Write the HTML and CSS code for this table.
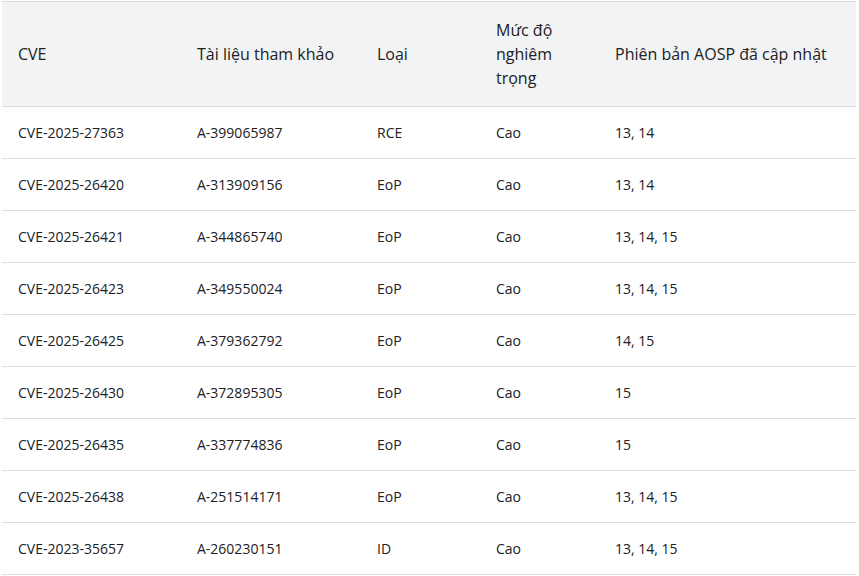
FILE: index.html
```html
<!DOCTYPE html>
<html lang="vi">
<head>
<meta charset="utf-8">
<link rel="stylesheet" href="styles.css">
</head>
<body>
<div class="wrap">
<table class="cve-table">
  <colgroup>
    <col class="c1"><col class="c2"><col class="c3"><col class="c4"><col class="c5">
  </colgroup>
  <thead>
    <tr>
      <th>CVE</th>
      <th>Tài liệu tham khảo</th>
      <th>Loại</th>
      <th>Mức độ nghiêm trọng</th>
      <th>Phiên bản AOSP đã cập nhật</th>
    </tr>
  </thead>
  <tbody>
    <tr><td>CVE-2025-27363</td><td>A-399065987</td><td>RCE</td><td>Cao</td><td>13, 14</td></tr>
    <tr><td>CVE-2025-26420</td><td>A-313909156</td><td>EoP</td><td>Cao</td><td>13, 14</td></tr>
    <tr><td>CVE-2025-26421</td><td>A-344865740</td><td>EoP</td><td>Cao</td><td>13, 14, 15</td></tr>
    <tr><td>CVE-2025-26423</td><td>A-349550024</td><td>EoP</td><td>Cao</td><td>13, 14, 15</td></tr>
    <tr><td>CVE-2025-26425</td><td>A-379362792</td><td>EoP</td><td>Cao</td><td>14, 15</td></tr>
    <tr><td>CVE-2025-26430</td><td>A-372895305</td><td>EoP</td><td>Cao</td><td>15</td></tr>
    <tr><td>CVE-2025-26435</td><td>A-337774836</td><td>EoP</td><td>Cao</td><td>15</td></tr>
    <tr><td>CVE-2025-26438</td><td>A-251514171</td><td>EoP</td><td>Cao</td><td>13, 14, 15</td></tr>
    <tr><td>CVE-2023-35657</td><td>A-260230151</td><td>ID</td><td>Cao</td><td>13, 14, 15</td></tr>
  </tbody>
</table>
</div>
</body>
</html>
```
FILE: styles.css
```css
html, body {
  margin: 0;
  padding: 0;
  background: #ffffff;
}
.wrap {
  padding: 1px 3px 0 2px;
}
.cve-table {
  width: 854px;
  border-collapse: collapse;
  table-layout: fixed;
  font-family: "Open Sans", "Noto Sans", sans-serif;
  color: #202124;
  border-top: 1px solid #dadce0;
}
.c1 { width: 179px; }
.c2 { width: 180px; }
.c3 { width: 119px; }
.c4 { width: 119px; }
.c5 { width: auto; }
.cve-table th {
  background: #f1f3f4;
  font-weight: 400;
  font-size: 16px;
  line-height: 24px;
  text-align: left;
  padding: 16px;
  border-bottom: 1px solid #dadce0;
  vertical-align: middle;
}
.cve-table td {
  font-size: 14px;
  line-height: 20px;
  padding: 16px 16px 15px;
  border-bottom: 1px solid #dadce0;
  vertical-align: top;
}
```
